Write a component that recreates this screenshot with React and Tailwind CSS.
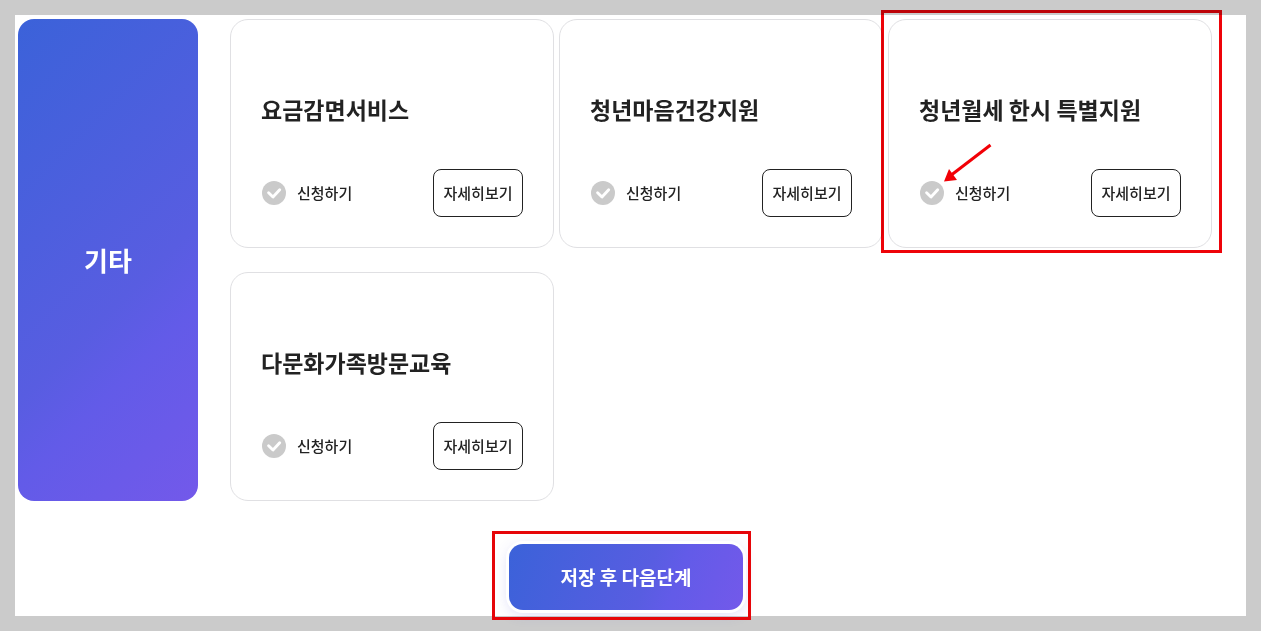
import React, { useState } from 'react';

const services = [
  { id: 'fee', name: '요금감면서비스' },
  { id: 'mind', name: '청년마음건강지원' },
  { id: 'rent', name: '청년월세 한시 특별지원', marked: true },
  { id: 'family', name: '다문화가족방문교육' },
];

function ApplyCheck({ id, checked, onChange }) {
  return (
    <label htmlFor={id} className="flex items-center gap-[11px] pl-px cursor-pointer">
      <span className="grid size-6">
        <input
          id={id}
          type="checkbox"
          checked={checked}
          onChange={onChange}
          className="col-start-1 row-start-1 size-6 appearance-none rounded-full bg-[#cacaca] checked:bg-[#4a5fdf] cursor-pointer"
        />
        <svg
          viewBox="0 0 24 24"
          className="col-start-1 row-start-1 size-6 pointer-events-none"
          fill="none"
          stroke="white"
          strokeWidth="2.9"
          strokeLinecap="round"
          strokeLinejoin="round"
        >
          <path d="M6.6 11.8 L11 16 L17.7 8.8" />
        </svg>
      </span>
      <span className="text-[15px] font-medium">신청하기</span>
    </label>
  );
}

function ServiceCard({ service, checked, onToggle }) {
  return (
    <li className="relative flex flex-col justify-between rounded-[18px] border border-[#e0e0e3] px-[30px] pt-[71px] pb-[30px]">
      <h3 className="text-[23px] leading-9 font-bold">{service.name}</h3>
      <div className="flex items-center justify-between">
        <ApplyCheck id={service.id} checked={checked} onChange={onToggle} />
        <button
          type="button"
          className="h-12 w-[90px] rounded-lg border border-[#222222] text-[15px] font-medium cursor-pointer"
        >
          자세히보기
        </button>
      </div>

      {service.marked && (
        <>
          {/* Highlight frame and pointer */}
          <div className="absolute -top-[10px] -right-[11px] -bottom-[6px] -left-2 border-3 border-[#ee0309] mix-blend-multiply pointer-events-none"></div>
          <svg
            viewBox="0 0 50 40"
            className="absolute top-[122px] left-[54px] h-10 w-[50px] pointer-events-none"
          >
            <path d="M47.5 3 L9 32.5" stroke="#f20006" strokeWidth="3" />
            <path d="M1 39.5 L6 27 L14 38 Z" fill="#f20006" />
          </svg>
        </>
      )}
    </li>
  );
}

export default function App() {
  const [selected, setSelected] = useState({});

  const handleToggle = (id) => {
    setSelected((prev) => ({ ...prev, [id]: !prev[id] }));
  };

  return (
    <div className="flex min-h-screen flex-col bg-[#cbcbcb] p-[15px] font-['Noto_Sans_CJK_KR','Noto_Sans',sans-serif] text-[#222222]">
      <main className="flex-1 bg-white pt-1 pb-1.5">
        <section className="flex gap-8 pl-[3px] pr-[34px]">
          {/* Category */}
          <div className="flex w-[180px] shrink-0 items-center justify-center rounded-2xl bg-[linear-gradient(135deg,#3b62d9_0%,#585de1_58%,#625be8_70%,#7359ea_100%)] pb-0.5">
            <h2 className="text-[26px] font-bold text-white">기타</h2>
          </div>

          {/* Services */}
          <ul className="grid flex-1 grid-cols-3 auto-rows-[229px] gap-x-[5px] gap-y-6">
            {services.map((service) => (
              <ServiceCard
                key={service.id}
                service={service}
                checked={!!selected[service.id]}
                onToggle={() => handleToggle(service.id)}
              />
            ))}
          </ul>
        </section>

        {/* Save */}
        <div className="mt-[43px] flex justify-center pr-[9px]">
          <div className="relative">
            <button
              type="button"
              className="block h-[66px] w-[234px] rounded-[14px] bg-[linear-gradient(110deg,#3b62d9_0%,#585de1_58%,#625be8_70%,#7359ea_100%)] text-[19px] font-bold text-white shadow-[0_0_0_3px_#ffffff,0_3px_14px_rgba(90,90,220,0.25)] cursor-pointer"
            >
              저장 후 다음단계
            </button>
            <div className="absolute -top-[13px] -right-2 -bottom-[10px] -left-[17px] border-3 border-[#e60509] pointer-events-none"></div>
          </div>
        </div>
      </main>
    </div>
  );
}
